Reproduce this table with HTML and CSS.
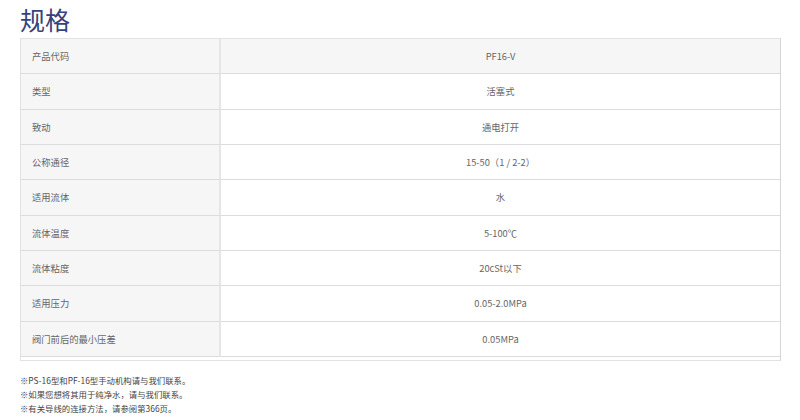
FILE: index.html
```html
<!DOCTYPE html>
<html lang="zh-CN">
<head>
<meta charset="utf-8">
<link rel="stylesheet" href="styles.css">
</head>
<body>
<div class="page">
  <h1 class="title">规格</h1>
  <div class="spec">
    <div class="grid">
      <div class="cell label head">产品代码</div><div class="cell value head">PF16-V</div>
      <div class="cell label">类型</div><div class="cell value">活塞式</div>
      <div class="cell label">致动</div><div class="cell value">通电打开</div>
      <div class="cell label">公称通径</div><div class="cell value">15-50（1 / 2-2）</div>
      <div class="cell label">适用流体</div><div class="cell value">水</div>
      <div class="cell label">流体温度</div><div class="cell value">5-100℃</div>
      <div class="cell label">流体粘度</div><div class="cell value">20cSt以下</div>
      <div class="cell label">适用压力</div><div class="cell value">0.05-2.0MPa</div>
      <div class="cell label">阀门前后的最小压差</div><div class="cell value">0.05MPa</div>
    </div>
  </div>
  <div class="notes">
    <p>※PS-16型和PF-16型手动机构请与我们联系。</p>
    <p>※如果您想将其用于纯净水，请与我们联系。</p>
    <p>※有关导线的连接方法，请参阅第366页。</p>
  </div>
</div>
</body>
</html>
```
FILE: styles.css
```css
html, body {
  margin: 0;
  padding: 0;
  background: #fff;
}
body {
  font-family: "Noto Sans CJK SC", "Noto Sans", sans-serif;
  color: #666;
}
.page {
  padding-left: 20px;
  width: 761px;
}
.title {
  margin: 0;
  height: 38px;
  font-size: 25px;
  line-height: 38px;
  font-weight: 400;
  color: #34447a;
}
.spec {
  border: 1px solid #e2e2e2;
  border-right-color: #d6d6d6;
  padding-bottom: 3px;
}
.grid {
  display: grid;
  grid-template-columns: 200px 1fr;
  grid-auto-rows: 35.33px;
}
.cell {
  box-sizing: border-box;
  border-bottom: 1px solid #dcdcdc;
  display: flex;
  align-items: center;
  font-size: 9.3px;
}
.label {
  background: #f6f6f6;
  border-right: 2px solid #e6e6e6;
  padding-left: 11px;
}
.value {
  justify-content: center;
  background: #fff;
}
.value.head {
  background: #f6f6f6;
}
.notes {
  margin-top: 12px;
  font-size: 8.4px;
  color: #444;
}
.notes p {
  margin: 0;
  line-height: 14px;
}
```
